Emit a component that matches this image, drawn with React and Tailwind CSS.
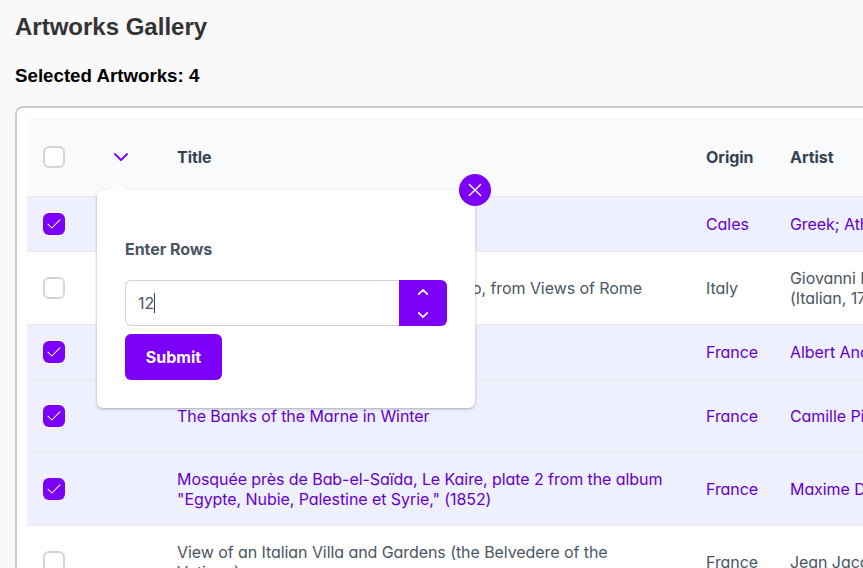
import React from "react";

const rows = [
  { title: "Neck-Amphora", origin: "Cales", artist: "Greek; Athens", selected: true, height: "h-[55px]" },
  { title: "Interior of the Church of San Lorenzo, from Views of Rome", right: true, origin: "Italy", artist: "Giovanni Battista Piranesi\n(Italian, 1720-1778)", selected: false, height: "h-[73px]" },
  { title: "Landscape", origin: "France", artist: "Albert André", selected: true, height: "h-[55px]" },
  { title: "The Banks of the Marne in Winter", origin: "France", artist: "Camille Pissarro", selected: true, height: "h-[73px]" },
  { title: "Mosquée près de Bab-el-Saïda, Le Kaire, plate 2 from the album\n\"Egypte, Nubie, Palestine et Syrie,\" (1852)", origin: "France", artist: "Maxime Du Camp", selected: true, height: "h-[73px]" },
  { title: "View of an Italian Villa and Gardens (the Belvedere of the\nVatican)", origin: "France", artist: "Jean Jacques", selected: false, height: "h-[73px]" },
];

function Checkbox({ checked }) {
  if (!checked) {
    return <span className="block h-[22px] w-[22px] rounded-md border-2 border-[#d1d5db] bg-white" />;
  }
  return (
    <span className="flex h-[22px] w-[22px] items-center justify-center rounded-md bg-[#7c00f8]">
      <svg width="14" height="14" viewBox="0 0 14 14" fill="none" stroke="white" strokeWidth="1.05" strokeLinecap="round" strokeLinejoin="round">
        <path d="M1 7.2 4.86 11 13 2.9" />
      </svg>
    </span>
  );
}

function Chevron({ size, up, color, weight }) {
  return (
    <svg width={size} height={size} viewBox="0 0 14 14" fill="none" stroke={color} strokeWidth={weight} strokeLinecap="round" strokeLinejoin="round">
      <path d={up ? "M1 9.9 7 4l6 5.9" : "M1 4.1 7 10l6-5.9"} />
    </svg>
  );
}

function Row({ row }) {
  return (
    <div className={`flex items-center border-b border-[#e5e7eb] tracking-[-0.07px] ${row.height} ${row.selected ? "bg-[#eef0ff] text-[#6400cc]" : "bg-white text-[#4b5563]"}`}>
      <div className="w-[134px] shrink-0 pl-4"><Checkbox checked={row.selected} /></div>
      <div className={`w-[529px] shrink-0 whitespace-pre px-4 ${row.right ? "flex justify-end pr-[48px]" : ""}`}>{row.title}</div>
      <div className="w-[84px] shrink-0 px-4">{row.origin}</div>
      <div className="w-[300px] shrink-0 whitespace-pre px-4">{row.artist}</div>
    </div>
  );
}

function RowsPopup() {
  return (
    <div className="absolute left-[97px] top-[190px] h-[218px] w-[378px] rounded-md bg-white px-7 pt-[49px] font-['Inter',sans-serif] text-base text-[#4b5563] shadow-[0_1px_3px_rgba(0,0,0,0.3)] [font-feature-settings:'cv02','cv03','cv04','cv11']">
      <span className="absolute left-[10px] top-[-10px] border-x-10 border-b-10 border-x-transparent border-b-[#f4f4f5]" />
      <span className="absolute left-[12px] top-[-8px] border-x-8 border-b-8 border-x-transparent border-b-white" />
      <button className="absolute right-[-16px] top-[-16px] flex h-8 w-8 items-center justify-center rounded-full bg-[#7c00f8]">
        <svg width="14" height="14" viewBox="0 0 14 14" fill="none" stroke="white" strokeWidth="1.4" strokeLinecap="round">
          <path d="M1.4 1.4 12.6 12.6M12.6 1.4 1.4 12.6" />
        </svg>
      </button>
      <div className="h-[41px] font-bold leading-5 tracking-[-0.04px]">Enter Rows</div>
      <div className="flex h-[46px]">
        <div className="flex w-[274px] items-center rounded-l-md border border-r-0 border-[#d1d5db] pl-3">
          <span className="tracking-[-0.07px]">12</span>
          <span className="h-5 w-px bg-[#374151]" />
        </div>
        <div className="flex w-12 flex-col rounded-r-md bg-[#7c00f8]">
          <span className="flex flex-1 items-center justify-center pt-px"><Chevron size={10} up color="white" weight="2.4" /></span>
          <span className="flex flex-1 items-center justify-center"><Chevron size={10} color="white" weight="2.4" /></span>
        </div>
      </div>
      <button className="mt-2 h-[46px] w-[97px] rounded-md bg-[#7c00f8] font-bold text-white">Submit</button>
    </div>
  );
}

export default function App() {
  return (
    <div className="relative h-[568px] w-[863px] overflow-hidden bg-[#f9f9f9] pl-[15px] pt-3 font-['Liberation_Sans',sans-serif]">
      <h1 className="h-[30px] text-2xl font-bold leading-[30px] text-[#333]">Artworks Gallery</h1>
      <h3 className="mt-[23px] h-[22px] text-[18.72px] font-bold leading-[22px] text-black">Selected Artworks: 4</h3>
      <div className="mt-[19px] w-[1100px] rounded-lg border-2 border-[#ccc] bg-white p-[10px] font-['Inter',sans-serif] text-base leading-5 [font-feature-settings:'cv02','cv03','cv04','cv11']">
        <div className="flex h-[79px] items-center border-b border-[#e5e7eb] bg-[#f9fafb] font-bold tracking-[-0.04px] text-[#374151]">
          <div className="w-[87px] shrink-0 pl-4"><Checkbox /></div>
          <div className="w-[47px] shrink-0"><Chevron size={14} color="#7c00f8" weight="2" /></div>
          <div className="w-[529px] shrink-0 px-4">Title</div>
          <div className="w-[84px] shrink-0 px-4">Origin</div>
          <div className="px-4">Artist</div>
        </div>
        {rows.map((row) => <Row key={row.title} row={row} />)}
      </div>
      <RowsPopup />
    </div>
  );
}
